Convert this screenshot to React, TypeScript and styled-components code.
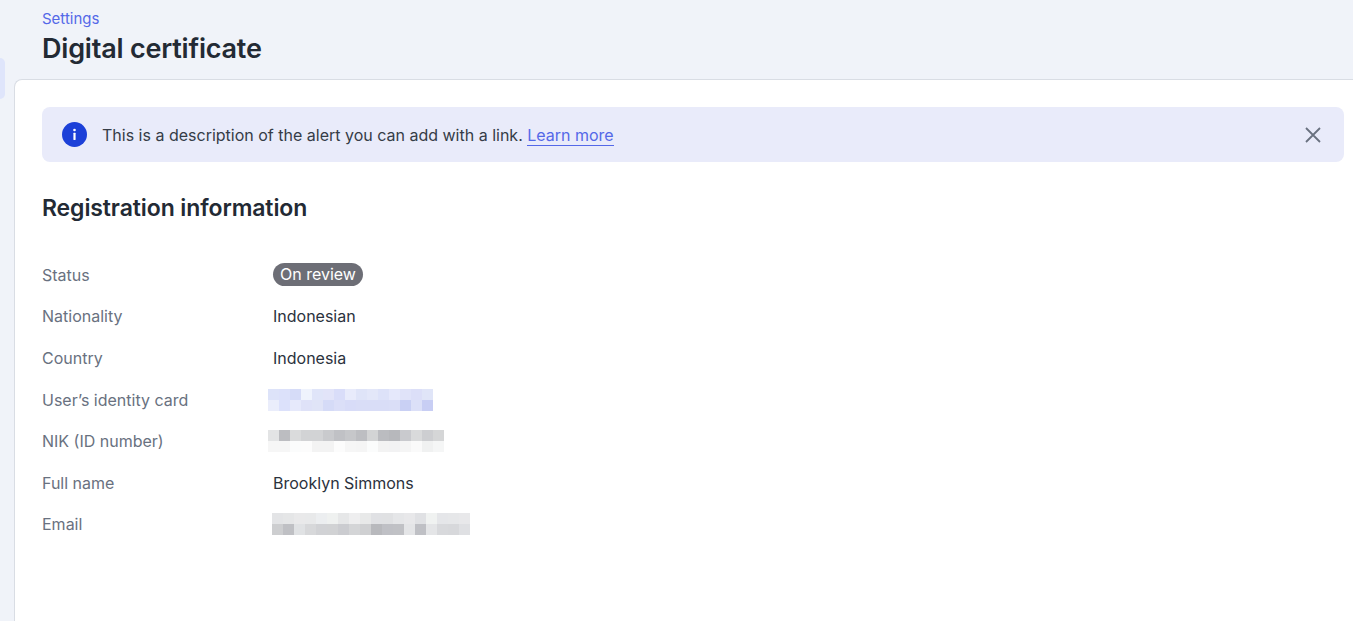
import styled, { createGlobalStyle } from "styled-components";

const blurRows = {
  identity: [
    ["#dde3f9", "#dce1fa", "#d6dcf8", "#eff3fd", "#e0e5f9", "#e2e4f9", "#d9ddf9", "#e8ebfb", "#dfe4f8", "#e3e7f9", "#dde2f9", "#e5e8fb", "#e0e3f9", "#dcdff8", "#e0e5f8"],
    ["#eaedfb", "#dce1fb", "#e6e9fb", "#dfe2f8", "#e0e4f7", "#d5dbf7", "#dbdff8", "#d8dcf8", "#d9ddf7", "#d9ddf7", "#d9ddf7", "#dadef7", "#c9d0f4", "#dce0f8", "#c8cef4"],
  ],
  nik: [
    ["#e3e4e5", "#bcbdc1", "#dadbdc", "#d2d3d5", "#d2d3d5", "#c9cacd", "#c0c1c5", "#c6c7ca", "#bdbec2", "#d3d4d5", "#bbbcc0", "#b7b8bc", "#c9cace", "#d9dadb", "#cdced1", "#d5d6d7"],
    ["#f6f6f6", "#f6f6f6", "#fbfcfc", "#fcfcfc", "#f3f3f3", "#f3f3f3", "#fcfcfc", "#f6f6f6", "#f5f5f5", "#fbfcfc", "#f3f3f3", "#f2f2f3", "#f5f5f5", "#fafafa", "#f0f1f1", "#f5f6f6"],
  ],
  email: [
    ["#e3e4e6", "#e5e6e7", "#e9e9ea", "#e8e9ea", "#eceef0", "#eff1f0", "#e6e7e8", "#eeeeef", "#e8e9e9", "#e0e1e4", "#e0e1e3", "#e5e6e8", "#e8e8ea", "#e0e1e4", "#f0f2f1", "#e5e6e9", "#e6e7e9", "#e8e8ea"],
    ["#cdced0", "#bfc0c4", "#e0e2e4", "#d7d8da", "#d1d2d5", "#d1d2d4", "#cbccd0", "#d4d5d7", "#cfd0d2", "#b8b9bd", "#bfc0c5", "#c0c1c5", "#e4e5e7", "#bfc0c5", "#e4e5e7", "#d8d9dc", "#d7d8db", "#dfe0e3"],
  ],
};

const GlobalStyle = createGlobalStyle`
  html, body {
    margin: 0;
    height: 100%;
    overflow: hidden;
    background: #f0f3f9;
    font-family: Inter, "Liberation Sans", sans-serif;
    color: #232a34;
  }
`;

const Page = styled.div`
  display: flex;
  height: 621px;
`;

const Rail = styled.div`
  width: 14px;
  flex-shrink: 0;
  padding-top: 58px;
`;

const RailMarker = styled.div`
  width: 5px;
  height: 41px;
  background: #dfe5fb;
  border-radius: 0 5px 5px 0;
`;

const Main = styled.main`
  flex: 1;
  min-width: 0;
  display: flex;
  flex-direction: column;
`;

const Header = styled.header`
  height: 79px;
  flex-shrink: 0;
  padding: 10px 0 0 28px;
  box-sizing: border-box;
`;

const Crumb = styled.a`
  display: block;
  font-size: 15px;
  line-height: 18px;
  color: #5468e8;
`;

const Title = styled.h1`
  margin: 3px 0 0;
  font-size: 27px;
  line-height: 36px;
  font-weight: 600;
  letter-spacing: -0.2px;
  color: #232a34;
`;

const Card = styled.section`
  flex: 1;
  background: #fff;
  border: 1px solid #d9dde4;
  border-right: none;
  border-bottom: none;
  border-radius: 8px 0 0 0;
  padding: 27px 9px 0 27px;
`;

const Alert = styled.div`
  height: 55px;
  display: flex;
  align-items: center;
  padding: 0 23px 0 20px;
  background: #e9ebfa;
  border-radius: 8px;
`;

const AlertText = styled.p`
  flex: 1;
  margin: 0 0 0 15px;
  font-size: 16px;
  color: #353c47;
`;

const AlertLink = styled.a`
  color: #5468e8;
  border-bottom: 1px solid #5468e8;
`;

const SectionTitle = styled.h2`
  margin: 32px 0 0;
  font-size: 23px;
  line-height: 28px;
  font-weight: 600;
  letter-spacing: -0.1px;
  color: #232a34;
`;

const Details = styled.dl`
  margin: 32px 0 0;
  display: grid;
  grid-template-columns: 231px 1fr;
  grid-auto-rows: 41.6px;
  align-items: center;
  font-size: 16px;
`;

const Label = styled.dt`
  color: #697180;
`;

const Value = styled.dd`
  margin: 0;
  color: #2b323d;
`;

const Badge = styled.span`
  display: inline-block;
  height: 23px;
  line-height: 23px;
  padding: 0 7px;
  border-radius: 12px;
  background: #6d6e76;
  color: #fff;
  vertical-align: middle;
`;

const Blurred = styled.div<{ $columns: number; $shift: number }>`
  display: grid;
  grid-template-columns: repeat(${({ $columns }) => $columns}, 11px);
  grid-auto-rows: 11px;
  margin-left: ${({ $shift }) => $shift}px;
  width: max-content;
`;

const BlurCell = styled.span<{ $color: string }>`
  background: ${({ $color }) => $color};
`;

const InfoIcon = () => (
  <svg width="25" height="25" viewBox="0 0 25 25" aria-hidden="true">
    <circle cx="12.5" cy="12.5" r="12.5" fill="#1c40d8" />
    <circle cx="12.5" cy="8" r="1.3" fill="#fff" />
    <rect x="11.4" y="10.8" width="2.2" height="7.2" rx="0.4" fill="#fff" />
  </svg>
);

const CloseIcon = () => (
  <svg width="16" height="16" viewBox="0 0 16 16" fill="none" aria-hidden="true">
    <path d="M1 1L15 15M15 1L1 15" stroke="#697180" strokeWidth="1.8" />
  </svg>
);

const Pixelated = ({ rows, shift }: { rows: string[][]; shift: number }) => (
  <Blurred $columns={rows[0].length} $shift={shift}>
    {rows.flat().map((color, index) => (
      <BlurCell key={index} $color={color} />
    ))}
  </Blurred>
);

export default function App() {
  return (
    <>
      <GlobalStyle />
      <Page>
        <Rail>
          <RailMarker />
        </Rail>
        <Main>
          <Header>
            <Crumb>Settings</Crumb>
            <Title>Digital certificate</Title>
          </Header>
          <Card>
            <Alert>
              <InfoIcon />
              <AlertText>
                This is a description of the alert you can add with a link.{" "}
                <AlertLink>Learn more</AlertLink>
              </AlertText>
              <CloseIcon />
            </Alert>
            <SectionTitle>Registration information</SectionTitle>
            <Details>
              <Label>Status</Label>
              <Value>
                <Badge>On review</Badge>
              </Value>
              <Label>Nationality</Label>
              <Value>Indonesian</Value>
              <Label>Country</Label>
              <Value>Indonesia</Value>
              <Label>User’s identity card</Label>
              <Value>
                <Pixelated rows={blurRows.identity} shift={-5} />
              </Value>
              <Label>NIK (ID number)</Label>
              <Value>
                <Pixelated rows={blurRows.nik} shift={-5} />
              </Value>
              <Label>Full name</Label>
              <Value>Brooklyn Simmons</Value>
              <Label>Email</Label>
              <Value>
                <Pixelated rows={blurRows.email} shift={-1} />
              </Value>
            </Details>
          </Card>
        </Main>
      </Page>
    </>
  );
}
